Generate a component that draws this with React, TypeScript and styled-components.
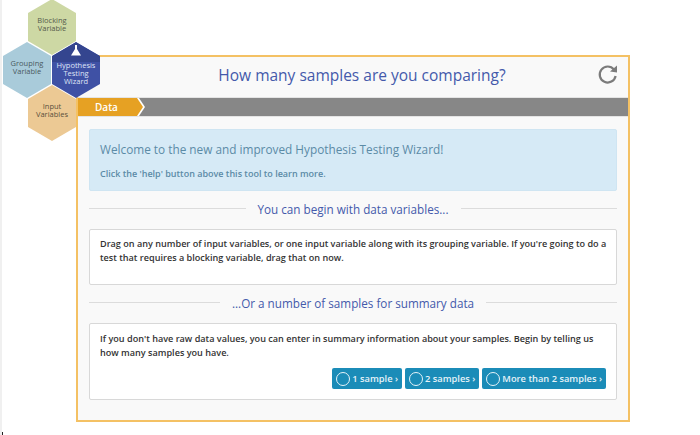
import React from "react";
import styled, { createGlobalStyle } from "styled-components";

const Global = createGlobalStyle`
  html, body {
    margin: 0;
    padding: 0;
    background: #fff;
    font-family: "Open Sans", "Liberation Sans", sans-serif;
  }
`;

const Page = styled.div`
  position: relative;
  width: 700px;
  height: 435px;
  overflow: hidden;
  box-sizing: border-box;
  padding: 55px 0 0 76px;
  border-left: 2px solid #f0f0f0;
  &::after {
    content: "";
    position: absolute;
    left: -2px;
    bottom: 0;
    width: 3px;
    height: 3px;
    background: #222;
  }
`;

const Panel = styled.div`
  box-sizing: border-box;
  width: 554px;
  height: 367px;
  margin-left: -2px;
  border: 2px solid #f4c164;
  background: #f9f9f9;
`;

const Header = styled.div`
  position: relative;
  box-sizing: border-box;
  height: 40px;
  padding: 0 0 4px 18px;
  display: flex;
  align-items: center;
  justify-content: center;
  color: #4459ab;
  font-size: 15.5px;
`;

const Reset = styled.svg`
  position: absolute;
  right: 9px;
  top: 6px;
  width: 22px;
  height: 22px;
`;

const StepBar = styled.div`
  height: 18px;
  background: #878787;
  border-top: 1px solid #e4e4e4;
  border-bottom: 1px solid #e4e4e4;
  display: flex;
`;

const StepTab = styled.div`
  position: relative;
  width: 67px;
  box-sizing: border-box;
  padding-left: 17px;
  background: #fff;
  color: #fff;
  font-size: 10px;
  font-weight: 600;
  line-height: 18px;
  clip-path: polygon(0 0, 61px 0, 67px 50%, 61px 100%, 0 100%);
  &::before {
    content: "";
    position: absolute;
    inset: 0;
    background: #e6a123;
    clip-path: polygon(0 0, 59px 0, 65px 50%, 59px 100%, 0 100%);
  }
`;

const StepLabel = styled.span`
  position: relative;
`;

const Body = styled.div`
  padding: 12px 11px 0;
`;

const Alert = styled.div`
  box-sizing: border-box;
  height: 62px;
  padding: 10px 10px;
  background: #d6eaf6;
  border: 1px solid #cfe5f2;
  border-radius: 2px;
  color: #5b8ba6;
`;

const AlertTitle = styled.div`
  font-size: 11.8px;
  line-height: 18px;
`;

const AlertNote = styled.div`
  margin-top: 9px;
  font-size: 9px;
  font-weight: 600;
  line-height: 13px;
`;

const Divider = styled.div`
  box-sizing: border-box;
  display: flex;
  align-items: center;
  gap: 12px;
  height: 38px;
  padding-bottom: 3px;
  color: #4459ab;
  font-size: 11.7px;
  &::before,
  &::after {
    content: "";
    flex: 1;
    height: 1px;
    background: #dcdcdc;
  }
`;

const Card = styled.div<{ $height: number; $top: number }>`
  box-sizing: border-box;
  height: ${(p) => p.$height}px;
  padding: ${(p) => p.$top}px 8px 0 10px;
  background: #fff;
  border: 1px solid #d8d8d8;
  border-radius: 2px;
  color: #333;
  font-size: 9.1px;
  font-weight: 600;
  line-height: 13.5px;
`;

const Actions = styled.div`
  display: flex;
  justify-content: flex-end;
  gap: 3px;
  margin: 9px 2px 0 0;
`;

const SampleButton = styled.button`
  display: flex;
  align-items: center;
  gap: 2px;
  height: 21px;
  padding: 0 4px;
  border: none;
  border-radius: 2px;
  background: #1b8cb8;
  color: #e6f3f8;
  font-family: inherit;
  font-size: 9.3px;
  font-weight: 600;
`;

const Ring = styled.span`
  box-sizing: border-box;
  width: 14px;
  height: 14px;
  border: 1px solid #e6f3f8;
  border-radius: 50%;
`;

const Hex = styled.div<{ $x: number; $y: number; $bg: string; $fg: string }>`
  position: absolute;
  left: ${(p) => p.$x}px;
  top: ${(p) => p.$y}px;
  width: 48px;
  height: 56px;
  box-sizing: border-box;
  display: flex;
  align-items: center;
  justify-content: center;
  text-align: center;
  background: ${(p) => p.$bg};
  color: ${(p) => p.$fg};
  font-size: 7.5px;
  line-height: 8px;
  clip-path: polygon(50% 0, 100% 25%, 100% 75%, 50% 100%, 0 75%, 0 25%);
`;

const HexLabel = styled.span<{ $shift: number }>`
  margin-top: ${(p) => p.$shift}px;
`;

const Flask = styled.svg`
  position: absolute;
  left: 0;
  top: 0;
  width: 48px;
  height: 20px;
`;

const buttons = ["1 sample ›", "2 samples ›", "More than 2 samples ›"];

export default function App() {
  return (
    <Page>
      <Global />
      <Panel>
        <Header>
          How many samples are you comparing?
          <Reset viewBox="0 0 22 22" fill="none">
            <path d="M17 6.5A8 8 0 1 0 18.6 13" stroke="#7b7b7b" strokeWidth="2.2" />
            <path d="M13 8.5 20 9.5 20 2.5Z" fill="#7b7b7b" />
          </Reset>
        </Header>
        <StepBar>
          <StepTab>
            <StepLabel>Data</StepLabel>
          </StepTab>
        </StepBar>
        <Body>
          <Alert>
            <AlertTitle>Welcome to the new and improved Hypothesis Testing Wizard!</AlertTitle>
            <AlertNote>Click the 'help' button above this tool to learn more.</AlertNote>
          </Alert>
          <Divider>You can begin with data variables...</Divider>
          <Card $height={56} $top={7}>
            Drag on any number of input variables, or one input variable along with its grouping
            variable. If you're going to do a test that requires a blocking variable, drag that on now.
          </Card>
          <Divider>...Or a number of samples for summary data</Divider>
          <Card $height={77} $top={8}>
            If you don't have raw data values, you can enter in summary information about your
            samples. Begin by telling us how many samples you have.
            <Actions>
              {buttons.map((label) => (
                <SampleButton key={label}>
                  <Ring />
                  {label}
                </SampleButton>
              ))}
            </Actions>
          </Card>
        </Body>
      </Panel>
      <Hex $x={26} $y={-1} $bg="#cdd8a4" $fg="#555b4a">
        <HexLabel $shift={-6}>
          Blocking
          <br />
          Variable
        </HexLabel>
      </Hex>
      <Hex $x={1} $y={42} $bg="#a9cbda" $fg="#4a5a61">
        <HexLabel $shift={-7}>
          Grouping
          <br />
          Variable
        </HexLabel>
      </Hex>
      <Hex $x={50} $y={42} $bg="#3f51a5" $fg="#dfe4f5">
        <Flask viewBox="0 0 48 20">
          <path d="M24 0 48 14V20H0V14Z" fill="#34458f" />
          <path d="M23 3h2v4l4 6.5h-10l4-6.5Z" fill="#fff" />
        </Flask>
        <HexLabel $shift={6}>
          Hypothesis
          <br />
          Testing
          <br />
          Wizard
        </HexLabel>
      </Hex>
      <Hex $x={26} $y={85} $bg="#ecc994" $fg="#5a503c">
        <HexLabel $shift={-7}>
          Input
          <br />
          Variables
        </HexLabel>
      </Hex>
    </Page>
  );
}
